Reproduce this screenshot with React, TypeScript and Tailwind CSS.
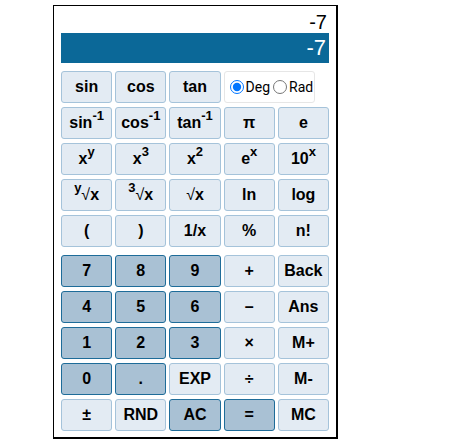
import type { ReactNode } from 'react'

type Key = { label: ReactNode; dark?: boolean }

const light = 'bg-[#e3ebf3] border-[#a5c3da]'
const dark = 'bg-[#a9c1d4] border-[#1e6c99]'

function Btn({ label, dark: isDark }: Key) {
  return (
    <button
      className={`h-[32px] rounded-[3px] border text-[16px] font-bold text-black leading-none flex items-center justify-center ${
        isDark ? dark : light
      }`}
    >
      {label}
    </button>
  )
}

const sup = (t: string) => <sup className="text-[13px] relative -top-[7px]">{t}</sup>

const sciKeys: Key[] = [
  { label: <>sin{sup('-1')}</> },
  { label: <>cos{sup('-1')}</> },
  { label: <>tan{sup('-1')}</> },
  { label: 'π' },
  { label: 'e' },
  { label: <>x{sup('y')}</> },
  { label: <>x{sup('3')}</> },
  { label: <>x{sup('2')}</> },
  { label: <>e{sup('x')}</> },
  { label: <>10{sup('x')}</> },
  { label: <>{sup('y')}<span className="font-normal">√</span>x</> },
  { label: <>{sup('3')}<span className="font-normal">√</span>x</> },
  { label: <><span className="font-normal">√</span>x</> },
  { label: 'ln' },
  { label: 'log' },
  { label: '(' },
  { label: ')' },
  { label: '1/x' },
  { label: '%' },
  { label: 'n!' },
]

const numKeys: Key[] = [
  { label: '7', dark: true },
  { label: '8', dark: true },
  { label: '9', dark: true },
  { label: '+' },
  { label: 'Back' },
  { label: '4', dark: true },
  { label: '5', dark: true },
  { label: '6', dark: true },
  { label: '–' },
  { label: 'Ans' },
  { label: '1', dark: true },
  { label: '2', dark: true },
  { label: '3', dark: true },
  { label: '×' },
  { label: 'M+' },
  { label: '0', dark: true },
  { label: '.', dark: true },
  { label: 'EXP' },
  { label: '÷' },
  { label: 'M-' },
  { label: '±' },
  { label: 'RND' },
  { label: 'AC', dark: true },
  { label: '=', dark: true },
  { label: 'MC' },
]

export default function App() {
  return (
    <div className="w-[453px] h-[447px] bg-white" style={{ fontFamily: '"Liberation Sans", Arial, sans-serif' }}>
      <div className="ml-[53px] mt-[5px] w-[285px] border-t border-l border-r-2 border-b-2 border-black px-[7px] pb-[6px]">
        <div className="h-[27px] pt-[5px] text-right text-[20px] leading-[22px] text-black pr-[2px]">-7</div>
        <div className="h-[30px] bg-[#0b6898] text-white text-right text-[22px] leading-[30px] pr-[3px]">-7</div>
        <div className="mt-[8px] grid grid-cols-5 gap-x-[3px] gap-y-[4px]">
          <Btn label="sin" />
          <Btn label="cos" />
          <Btn label="tan" />
          <div
            className="col-span-2 w-[91px] h-[32px] rounded-[3px] border border-[#e6e6e6] bg-white flex items-center pl-[5px] text-[14px] text-black"
            style={{ fontFamily: 'Roboto, "Liberation Sans", sans-serif' }}
          >
            <label className="flex items-center">
              <input type="radio" name="unit" defaultChecked className="m-0 mr-[2px] w-[14px] h-[14px]" />
              Deg
            </label>
            <label className="flex items-center ml-[3px]">
              <input type="radio" name="unit" className="m-0 mr-[2px] w-[14px] h-[14px]" />
              Rad
            </label>
          </div>
          {sciKeys.map((k, i) => (
            <Btn key={i} {...k} />
          ))}
        </div>
        <div className="mt-[8px] grid grid-cols-5 gap-x-[3px] gap-y-[4px]">
          {numKeys.map((k, i) => (
            <Btn key={i} {...k} />
          ))}
        </div>
      </div>
    </div>
  )
}
